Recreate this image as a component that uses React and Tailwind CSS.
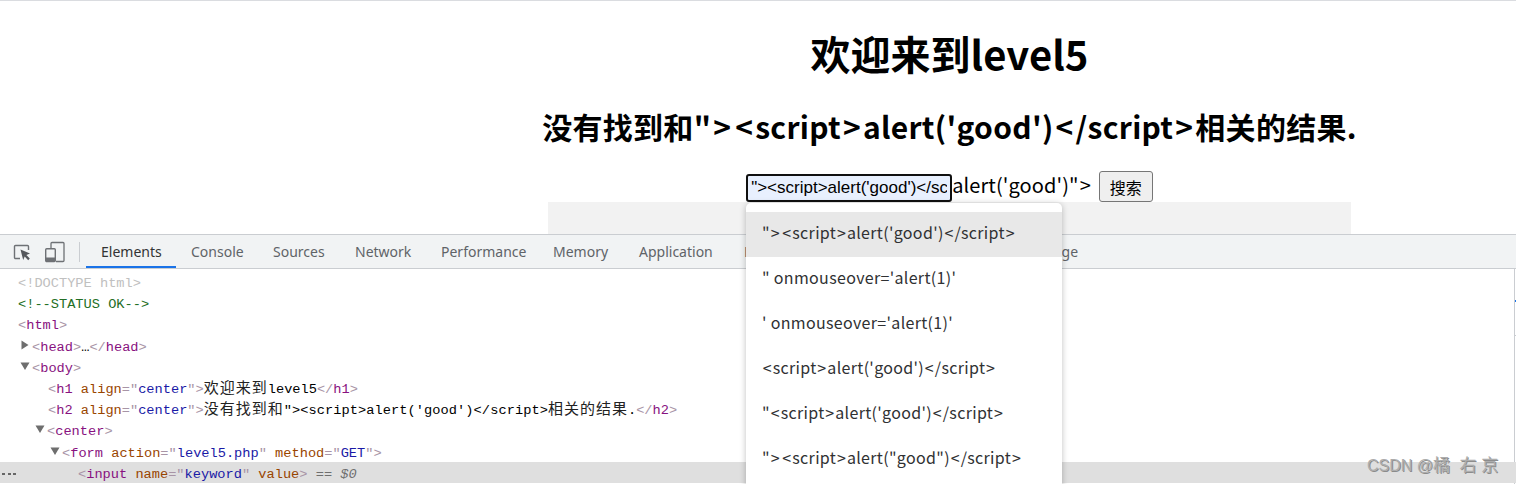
import React from 'react';

const sans = { fontFamily: '"Noto Sans", "Noto Sans CJK SC", sans-serif' };
const cjk = { fontFamily: '"Noto Sans CJK SC", sans-serif' };

const tabs = [
  { label: 'Elements', width: 'w-[90px]' },
  { label: 'Console', width: 'w-[82px]' },
  { label: 'Sources', width: 'w-[82px]' },
  { label: 'Network', width: 'w-[86px]' },
  { label: 'Performance', width: 'w-[112px]' },
  { label: 'Memory', width: 'w-[86px]' },
  { label: 'Application', width: 'w-[105px]' },
  { label: 'Lighthouse', width: 'w-[283px]' },
  { label: 'Storage', width: 'w-[80px]' },
];

const suggestions = [
  `"> <script>alert('good')</script>`,
  `" onmouseover='alert(1)'`,
  `' onmouseover='alert(1)'`,
  `<script>alert('good')</script>`,
  `"<script>alert('good')</script>`,
  `"> <script>alert("good")</script>`,
];

// the original font sets < and > with more air than Noto does
function Spaced({ text, className }) {
  return text.split(/(> |[<>])/).map((part, i) => {
    if (part === '> ') return <span key={i} className="-mr-[3px]"><span className={className}>&gt;</span> </span>;
    if (part === '<' || part === '>') return <span key={i} className={className}>{part}</span>;
    return part;
  });
}

const B = ({ children }) => <span className="text-[#a894a6]">{children}</span>;
const T = ({ children }) => <span className="text-[#881280]">{children}</span>;
const N = ({ children }) => <span className="text-[#994500]">{children}</span>;
const V = ({ children }) => <span className="text-[#1a1aa6]">{children}</span>;
const Cjk = ({ children }) => (
  <span className="text-[15px] leading-none tracking-[1px] text-[#222]" style={cjk}>{children}</span>
);

function Caret({ open }) {
  return (
    <svg width="10" height="10" viewBox="0 0 10 10" className="absolute -left-[12px] top-[5px]">
      {open ? <path d="M0.5 1.5h9L5 9z" fill="#6e6e6e" /> : <path d="M1.5 0.5v9L8.5 5z" fill="#6e6e6e" />}
    </svg>
  );
}

function Row({ indent, caret, selected, children }) {
  return (
    <div
      className={`h-[21.2px] overflow-visible leading-[26px] whitespace-pre ${selected ? '-mr-[2px] bg-[#dfdfdf]' : ''}`}
      style={{ paddingLeft: indent }}
    >
      <span className="relative inline-block h-[21px] align-top">
        {caret && <Caret open={caret === 'open'} />}
        {children}
      </span>
    </div>
  );
}

function InspectIcon() {
  return (
    <svg width="20" height="20" viewBox="0 0 20 20" fill="none">
      <path d="M8 16.5H3.5a1 1 0 0 1-1-1v-11a1 1 0 0 1 1-1h12a1 1 0 0 1 1 1V8" stroke="#6e7175" strokeWidth="1.4" />
      <path d="M8.5 7.5l9.5 4-3.6 1.5 3.4 3.6-1.6 1.6-3.5-3.6-1.5 3.5z" fill="#55585c" />
    </svg>
  );
}

function DeviceIcon() {
  return (
    <svg width="22" height="22" viewBox="0 0 22 22" fill="none">
      <path d="M7 7V2.5a1 1 0 0 1 1-1h11a1 1 0 0 1 1 1v17a1 1 0 0 1-1 1h-7" stroke="#6e7175" strokeWidth="1.3" />
      <rect x="1.7" y="7.7" width="9.6" height="12.8" rx="1" stroke="#6e7175" strokeWidth="1.4" />
      <rect x="2" y="16.5" width="9" height="4" fill="#6e7175" />
    </svg>
  );
}

export default function App() {
  return (
    <div className="relative h-[484px] w-[1516px] overflow-hidden bg-white text-black">
      {/* page under test, wider than the visible area */}
      <div className="h-[234px] overflow-hidden border-t border-[#dadce0]">
        <div className="w-[1899px]" style={cjk}>
          <h1 className="pt-[22px] text-center text-[40px] leading-[60px] font-bold">欢迎来到level5</h1>
          <h2 className="mt-[21px] text-center text-[30px] leading-[44px] font-bold tracking-[0.3px] whitespace-nowrap">
            没有找到和"<Spaced text={`><script>alert('good')</script>`} className="mx-[2px]" />相关的结果.
          </h2>
          <div className="mt-[20px] flex h-[34px] items-end justify-center">
            <input
              readOnly
              value={`"><script>alert('good')</script>`}
              className="h-[28px] w-[206px] rounded-[3px] border-2 border-[#101010] bg-[#e8f0fe] px-[3px] text-[17px] outline-none"
              style={{ fontFamily: '"Liberation Sans", sans-serif' }}
            />
            <span className="pb-[2px] text-[20px] leading-[30px] tracking-[0.1px]">alert('good')"<span className="mx-[1px]">&gt;</span></span>
            <button className="ml-[7px] h-[31px] w-[54px] rounded-[3px] border border-[#767676] bg-[#efefef] text-[16px]">搜索</button>
          </div>
          <div className="mx-auto h-[40px] w-[803px] bg-[#f2f2f2]" />
        </div>
      </div>

      {/* devtools */}
      <div className="h-[250px] border-t border-[#cacdd1]">
        <div className="flex h-[34px] items-center border-b border-[#cacdd1] bg-[#f1f3f4]" style={sans}>
          <div className="ml-[12px] flex w-[20px] items-center"><InspectIcon /></div>
          <div className="ml-[12px] flex w-[22px] items-center"><DeviceIcon /></div>
          <div className="ml-[13px] h-[20px] w-px bg-[#cacdd1]" />
          <div className="ml-[6px] flex h-full">
            {tabs.map((t, i) => (
              <div
                key={t.label}
                className={`flex shrink-0 items-center whitespace-nowrap pl-[15px] text-[14px] ${t.width} ${i === 0 ? 'border-b-2 border-[#1a73e8] pt-[2px] text-[#333]' : 'text-[#5f6368]'}`}
              >
                {t.label}
              </div>
            ))}
          </div>
        </div>
        <div className="mr-[1px] h-[216px] border-r border-[#cacdd1] pt-[2px] text-[13.67px]" style={{ fontFamily: '"Liberation Mono", monospace' }}>
          <Row indent={18}><span className="text-[#c0c0c0]">&lt;!DOCTYPE html&gt;</span></Row>
          <Row indent={18}><span className="text-[#236e25]">&lt;!--STATUS OK--&gt;</span></Row>
          <Row indent={18}><B>&lt;</B><T>html</T><B>&gt;</B></Row>
          <Row indent={32} caret="closed"><B>&lt;</B><T>head</T><B>&gt;</B>…<B>&lt;/</B><T>head</T><B>&gt;</B></Row>
          <Row indent={32} caret="open"><B>&lt;</B><T>body</T><B>&gt;</B></Row>
          <Row indent={48}><B>&lt;</B><T>h1</T> <N>align</N><B>="</B><V>center</V><B>"&gt;</B><Cjk>欢迎来到</Cjk>level5<B>&lt;/</B><T>h1</T><B>&gt;</B></Row>
          <Row indent={48}><B>&lt;</B><T>h2</T> <N>align</N><B>="</B><V>center</V><B>"&gt;</B><Cjk>没有找到和</Cjk><span className="tracking-[0.06px]">"&gt;&lt;script&gt;alert('good')&lt;/script&gt;</span><Cjk>相关的结果</Cjk>.<B>&lt;/</B><T>h2</T><B>&gt;</B></Row>
          <Row indent={47} caret="open"><B>&lt;</B><T>center</T><B>&gt;</B></Row>
          <Row indent={62} caret="open"><B>&lt;</B><T>form</T> <N>action</N><B>="</B><V>level5.php</V><B>"</B> <N>method</N><B>="</B><V>GET</V><B>"&gt;</B></Row>
          <Row indent={78} selected><B>&lt;</B><T>input</T> <N>name</N><B>="</B><V>keyword</V><B>"</B> <N>value</N><B>&gt;</B><span className="text-[#6e6e6e]"> == <i>$0</i></span></Row>
        </div>
      </div>

      {/* selected row dots */}
      <div className="absolute left-[2px] top-[473px] flex gap-[2.5px]">
        <span className="h-[2px] w-[3px] bg-[#666]" />
        <span className="h-[2px] w-[3px] bg-[#666]" />
        <span className="h-[2px] w-[3px] bg-[#666]" />
      </div>

      {/* marks on the sidebar edge */}
      <div className="absolute right-0 top-[300px] h-[2px] w-px bg-[#1a73e8]" />
      <div className="absolute right-0 top-[335px] h-px w-px bg-[#cacdd1]" />

      {/* autocomplete dropdown */}
      <div
        className="absolute left-[746px] top-[203px] h-[290px] w-[316px] rounded-t-[5px] bg-white pt-[9px] text-[16px] tracking-[0.33px] text-[#303133] shadow-[0_1px_6px_rgba(0,0,0,0.25)]"
        style={cjk}
      >
        {suggestions.map((s, i) => (
          <div key={s} className={`flex h-[45px] items-center px-[16px] pb-[5px] whitespace-pre ${i === 0 ? 'bg-[#e8e8e8]' : ''}`}>
            <span><Spaced text={s} className="mx-[0.75px]" /></span>
          </div>
        ))}
      </div>

      {/* watermark */}
      <div
        className="absolute left-[1367px] top-[455px] text-[16px] leading-[22px] whitespace-pre text-[#adadad] [text-shadow:1px_1px_0_#8c8c8c]"
        style={{ fontFamily: '"Liberation Sans", "Noto Sans CJK SC", sans-serif' }}
      >
        CSDN @<span className="text-[17px]">橘  右 京</span>
      </div>
    </div>
  );
}
